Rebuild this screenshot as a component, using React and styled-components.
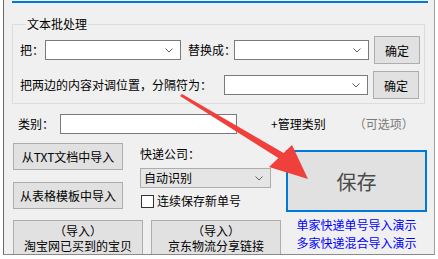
import styled, { createGlobalStyle } from 'styled-components';

const GlobalStyle = createGlobalStyle`
  html, body {
    margin: 0;
    padding: 0;
    background: #ffffff;
  }
  body {
    font-family: "Noto Sans CJK SC", "Noto Sans", sans-serif;
    font-size: 12px;
    color: #000;
  }
`;

const Window = styled.div`
  position: relative;
  box-sizing: border-box;
  margin-left: 3px;
  width: 432px;
  height: 255px;
  padding: 1px 0 0 8px;
  background: #f0f0f0;
  border-left: 1px solid #6a6a6a;
  border-right: 1px solid #a0a0a0;
  border-bottom: 1px solid #8a8a8a;
  overflow: hidden;
`;

const TopLine = styled.div`
  width: 416px;
  height: 2px;
  background: #0078d7;
`;

const Group = styled.fieldset`
  box-sizing: border-box;
  width: 412px;
  height: 87px;
  margin: 14px 0 0 0;
  padding: 5px 4px 0 7px;
  border: 1px solid #dcdcdc;
  display: flex;
  flex-direction: column;
  gap: 7px;
`;

const Legend = styled.legend`
  padding: 0 1px;
  margin-left: 6px;
  line-height: 14px;
  font-size: 12px;
`;

const Row = styled.div`
  display: flex;
  align-items: center;
  height: 28px;
`;

const Label = styled.span`
  line-height: 14px;
  white-space: nowrap;
  width: ${({ $w }) => ($w ? `${$w}px` : 'auto')};
  color: ${({ $muted }) => ($muted ? '#7a7a7a' : '#000')};
  margin-left: ${({ $ml }) => ($ml ? `${$ml}px` : '0')};
`;

const Combo = styled.div`
  box-sizing: border-box;
  position: relative;
  width: ${({ $w }) => $w}px;
  height: 20px;
  margin-left: ${({ $ml }) => ($ml ? `${$ml}px` : '0')};
  margin-top: ${({ $mt }) => ($mt ? `${$mt}px` : '0')};
  background: ${({ $flat }) => ($flat ? '#e5e5e5' : '#ffffff')};
  border: 1px solid ${({ $flat }) => ($flat ? '#acacac' : '#7a7a7a')};
  display: flex;
  align-items: center;
  padding-left: 3px;
  line-height: 14px;
`;

const Chevron = styled.svg`
  position: absolute;
  right: 7px;
  top: 7px;
  width: 8px;
  height: 5px;
`;

const Button = styled.button`
  box-sizing: border-box;
  width: ${({ $w }) => $w}px;
  height: ${({ $h }) => $h}px;
  margin-left: ${({ $ml }) => ($ml ? `${$ml}px` : '0')};
  padding: 0;
  background: #e1e1e1;
  border: 1px solid #adadad;
  font-family: "Noto Sans CJK SC", "Noto Sans", sans-serif;
  font-size: 12px;
  line-height: 15px;
  color: #000;
  display: flex;
  flex-direction: column;
  align-items: center;
  justify-content: center;
`;

const CategoryRow = styled.div`
  display: flex;
  align-items: center;
  height: 20px;
  margin-top: 10px;
  padding-left: 6px;
`;

const Input = styled.div`
  box-sizing: border-box;
  width: 177px;
  height: 20px;
  margin-left: 10px;
  background: #fff;
  border: 1px solid #7a7a7a;
`;

const Lower = styled.div`
  display: flex;
  margin-top: 9px;
  padding-left: 1px;
`;

const LeftBlock = styled.div`
  display: flex;
  flex-direction: column;
  width: 273px;
`;

const TopPart = styled.div`
  display: flex;
`;

const ImportColumn = styled.div`
  display: flex;
  flex-direction: column;
  gap: 12px;
`;

const CourierColumn = styled.div`
  display: flex;
  flex-direction: column;
  margin-left: 17px;
  padding-top: 4px;
`;

const CheckRow = styled.label`
  display: flex;
  align-items: center;
  margin-top: 6px;
  height: 14px;
  line-height: 14px;
`;

const Box = styled.span`
  box-sizing: border-box;
  width: 13px;
  height: 13px;
  margin: 0 3px 0 1px;
  background: #fff;
  border: 1px solid #333;
`;

const BottomRow = styled.div`
  display: flex;
  gap: 8px;
  margin-top: 11px;
`;

const RightBlock = styled.div`
  display: flex;
  flex-direction: column;
  align-items: center;
  width: 141px;
  padding-top: 7px;
`;

const SaveButton = styled.button`
  box-sizing: border-box;
  width: 141px;
  height: 62px;
  padding: 0;
  background: #e1e1e1;
  border: 2px solid #0078d7;
  font-family: "Noto Sans CJK SC", "Noto Sans", sans-serif;
  font-size: 20px;
  color: #4a4a4a;
`;

const LinkText = styled.a`
  display: block;
  margin-top: ${({ $mt }) => $mt}px;
  color: #0000ff;
  line-height: 14px;
  text-decoration: none;
  white-space: nowrap;
`;

const ArrowLayer = styled.svg`
  position: absolute;
  left: -4px;
  top: 0;
  width: 438px;
  height: 259px;
  pointer-events: none;
`;

function Arrow() {
  return (
    <Chevron viewBox="0 0 8 5">
      <polyline points="0.5,0.5 4,4 7.5,0.5" fill="none" stroke="#606060" strokeWidth="1" />
    </Chevron>
  );
}

export default function App() {
  return (
    <>
      <GlobalStyle />
      <Window>
        <TopLine />
        <Group>
          <Legend>文本批处理</Legend>
          <Row>
            <Label $w={25}>把：</Label>
            <Combo $w={136}>
              <Arrow />
            </Combo>
            <Label $ml={7} $w={46}>替换成：</Label>
            <Combo $w={135}>
              <Arrow />
            </Combo>
            <Button $w={46} $h={28} $ml={5}>确定</Button>
          </Row>
          <Row>
            <Label $w={204}>把两边的内容对调位置，分隔符为：</Label>
            <Combo $w={144}>
              <Arrow />
            </Combo>
            <Button $w={46} $h={28} $ml={5}>确定</Button>
          </Row>
        </Group>
        <CategoryRow>
          <Label $w={32}>类别：</Label>
          <Input />
          <Label $ml={34}>+管理类别</Label>
          <Label $ml={28} $muted>（可选项）</Label>
        </CategoryRow>
        <Lower>
          <LeftBlock>
            <TopPart>
              <ImportColumn>
                <Button $w={110} $h={27}>从TXT文档中导入</Button>
                <Button $w={110} $h={27}>从表格模板中导入</Button>
              </ImportColumn>
              <CourierColumn>
                <Label>快递公司：</Label>
                <Combo $w={131} $mt={7} $flat>
                  自动识别
                  <Arrow />
                </Combo>
                <CheckRow>
                  <Box />
                  连续保存新单号
                </CheckRow>
              </CourierColumn>
            </TopPart>
            <BottomRow>
              <Button $w={130} $h={35}>
                <span>（导入）</span>
                <span>淘宝网已买到的宝贝</span>
              </Button>
              <Button $w={130} $h={35}>
                <span>（导入）</span>
                <span>京东物流分享链接</span>
              </Button>
            </BottomRow>
          </LeftBlock>
          <RightBlock>
            <SaveButton>保存</SaveButton>
            <LinkText $mt={6}>单家快递单号导入演示</LinkText>
            <LinkText $mt={4}>多家快递混合导入演示</LinkText>
          </RightBlock>
        </Lower>
        <ArrowLayer viewBox="0 0 438 259">
          <polygon points="180,96 182,94 287,155 283,161" fill="#f0403c" />
          <polygon points="308,179 269,167 292,145" fill="#f0403c" />
        </ArrowLayer>
      </Window>
    </>
  );
}
